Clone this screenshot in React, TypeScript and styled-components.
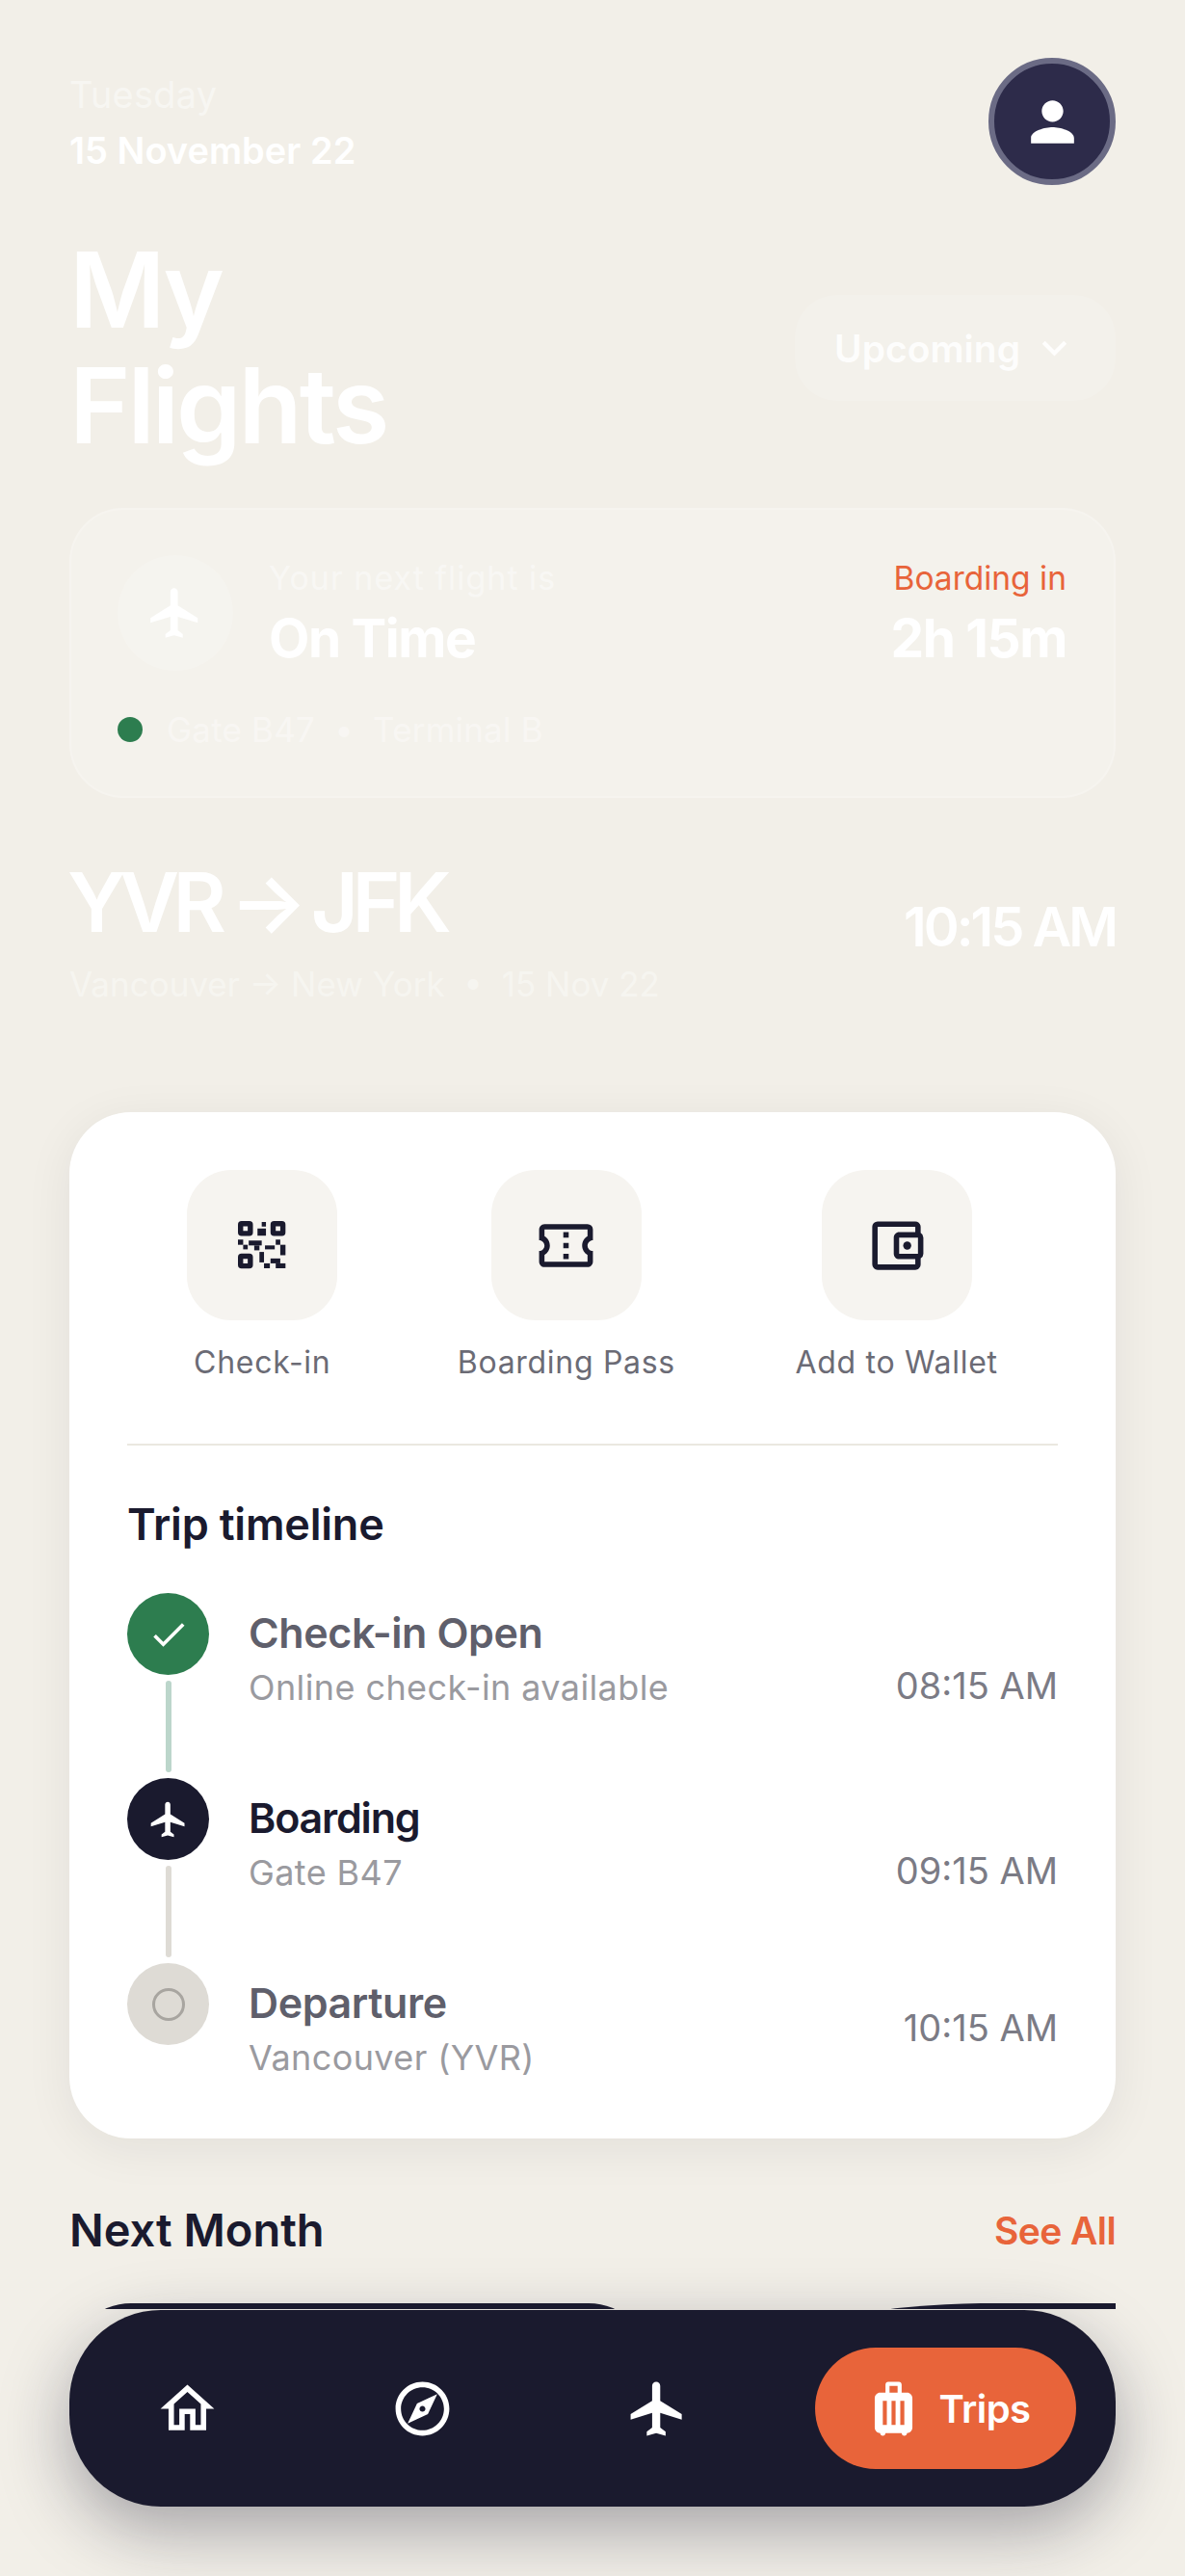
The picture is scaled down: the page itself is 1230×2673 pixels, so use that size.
import styled, { createGlobalStyle } from "styled-components";
import {
  MdCheck,
  MdExpandMore,
  MdFlight,
  MdLuggage,
  MdOutlineAccountBalanceWallet,
  MdOutlineConfirmationNumber,
  MdOutlineExplore,
  MdOutlineHome,
  MdPerson,
} from "react-icons/md";
import type { ReactNode } from "react";

const navy = "#1a1a2e";
const orange = "#e8643a";

const Global = createGlobalStyle`
  html, body {
    margin: 0;
    padding: 0;
    background: #f2efe8;
  }
  * {
    box-sizing: border-box;
  }
  body {
    font-family: Inter, "Liberation Sans", sans-serif;
  }
`;

const Page = styled.div`
  position: relative;
  width: 1230px;
  height: 2673px;
  overflow: hidden;
  padding: 72px 72px 0;
  background: #f2efe8;
`;

const TopBar = styled.header`
  display: flex;
  justify-content: space-between;
  align-items: flex-start;
  margin-top: -12px;
`;
const DateBlock = styled.div`
  display: flex;
  flex-direction: column;
  padding-top: 9px;
`;
const DayName = styled.span`
  font-size: 38px;
  line-height: 59px;
  color: rgba(255, 255, 255, 0.45);
  letter-spacing: 0.2px;
`;
const DateText = styled.span`
  font-size: 38px;
  line-height: 56px;
  font-weight: 600;
  color: #fff;
`;
const Avatar = styled.div`
  display: flex;
  align-items: center;
  justify-content: center;
  width: 132px;
  height: 132px;
  border-radius: 50%;
  background: #2d2b4a;
  border: 6px solid #6b6b85;
  color: #fff;
`;

const TitleRow = styled.div`
  display: flex;
  justify-content: space-between;
  align-items: center;
  margin-top: 49px;
`;
const Title = styled.h1`
  margin: 0;
  font-size: 108px;
  line-height: 120px;
  font-weight: 600;
  color: #fff;
  letter-spacing: -3px;
`;
const Filter = styled.div`
  display: flex;
  align-items: center;
  gap: 10px;
  width: 333px;
  height: 110px;
  padding: 0 38px 0 41px;
  border-radius: 44px;
  background: rgba(255, 255, 255, 0.14);
  color: rgba(255, 255, 255, 0.9);
  font-size: 39px;
  font-weight: 600;
`;

const StatusCard = styled.section`
  margin-top: 46px;
  padding: 46px 49px 50px 48px;
  height: 301px;
  border-radius: 56px;
  background: rgba(255, 255, 255, 0.2);
  border: 2px solid rgba(255, 255, 255, 0.16);
`;
const StatusTop = styled.div`
  display: flex;
  align-items: center;
  justify-content: space-between;
`;
const StatusLeft = styled.div`
  display: flex;
  align-items: center;
  gap: 37px;
`;
const PlaneBubble = styled.div`
  display: flex;
  align-items: center;
  justify-content: center;
  width: 120px;
  height: 120px;
  border-radius: 50%;
  background: rgba(255, 255, 255, 0.16);
  color: rgba(255, 255, 255, 0.95);
`;
const StatusStack = styled.div<{ $right?: boolean }>`
  display: flex;
  flex-direction: column;
  gap: 2px;
  align-items: ${(p) => (p.$right ? "flex-end" : "flex-start")};
`;
const Small = styled.span<{ $orange?: boolean }>`
  font-size: ${(p) => (p.$orange ? "33.5px" : "34px")};
  line-height: 50px;
  letter-spacing: ${(p) => (p.$orange ? "0" : "1px")};
  color: ${(p) => (p.$orange ? orange : "rgba(255, 255, 255, 0.45)")};
`;
const Big = styled.span`
  font-size: 55px;
  line-height: 70px;
  font-weight: 700;
  color: #fff;
  letter-spacing: -1.4px;
`;
const GateRow = styled.div`
  display: flex;
  align-items: center;
  gap: 25px;
  margin-top: 39px;
`;
const GreenDot = styled.span`
  width: 26px;
  height: 26px;
  border-radius: 50%;
  background: #2d7d4f;
`;
const GateText = styled.span`
  font-size: 35px;
  letter-spacing: 0.2px;
  color: rgba(255, 255, 255, 0.4);
  white-space: pre;
`;

const RouteRow = styled.div`
  display: flex;
  justify-content: space-between;
  align-items: flex-end;
  margin-top: 54px;
`;
const RouteCode = styled.div`
  font-size: 85px;
  line-height: 110px;
  font-weight: 600;
  color: #fff;
  letter-spacing: -6.5px;
  word-spacing: -5px;
  margin-left: -2px;
`;
const RouteTime = styled.div`
  font-size: 56px;
  line-height: 70px;
  font-weight: 600;
  color: #fff;
  letter-spacing: -3px;
  margin-bottom: -5px;
`;
const RouteSub = styled.div`
  font-size: 35px;
  line-height: 50px;
  margin-top: 4px;
  color: rgba(255, 255, 255, 0.4);
  white-space: pre;
`;

const MainCard = styled.section`
  margin-top: 108px;
  padding: 60px 60px 0;
  height: 1065px;
  border-radius: 64px;
  background: #fff;
  box-shadow: 0 10px 50px rgba(26, 26, 46, 0.07);
`;
const Actions = styled.div`
  display: flex;
  justify-content: space-around;
`;
const Action = styled.div`
  display: flex;
  flex-direction: column;
  align-items: center;
  gap: 22px;
`;
const Tile = styled.div`
  display: flex;
  align-items: center;
  justify-content: center;
  width: 156px;
  height: 156px;
  border-radius: 46px;
  background: #f6f4f0;
  color: ${navy};
`;
const ActionLabel = styled.span`
  font-size: 32px;
  line-height: 44px;
  letter-spacing: 0.7px;
  color: #6b6b75;
`;
const Divider = styled.hr`
  margin: 62px 0 0;
  border: 0;
  height: 2px;
  background: #ebe8e0;
`;
const TimelineTitle = styled.h2`
  margin: 52px 0 0;
  font-size: 45px;
  line-height: 60px;
  font-weight: 600;
  color: ${navy};
  letter-spacing: -0.2px;
`;
const Steps = styled.div`
  margin-top: 41px;
`;
const Step = styled.div`
  display: flex;
  align-items: center;
`;
const Marker = styled.div`
  display: flex;
  flex-direction: column;
  align-items: center;
  align-self: flex-start;
  width: 85px;
  margin-right: 41px;
`;
const Bubble = styled.div<{ $bg: string; $fg: string }>`
  display: flex;
  align-items: center;
  justify-content: center;
  width: 85px;
  height: 85px;
  border-radius: 50%;
  background: ${(p) => p.$bg};
  color: ${(p) => p.$fg};
`;
const Ring = styled.span`
  width: 34px;
  height: 34px;
  border-radius: 50%;
  border: 3px solid #a8a5a0;
`;
const Connector = styled.div<{ $color: string }>`
  width: 6px;
  height: 95px;
  margin: 6px 0;
  border-radius: 3px;
  background: ${(p) => p.$color};
`;
const StepBody = styled.div`
  flex: 1;
  align-self: flex-start;
  padding: 13px 0 10px;
  display: flex;
  flex-direction: column;
`;
const StepTitle = styled.span<{ $active?: boolean }>`
  font-size: 43px;
  line-height: 56px;
  font-weight: 600;
  color: ${(p) => (p.$active ? navy : "#5f5f6b")};
  letter-spacing: ${(p) => (p.$active ? "-1.2px" : "-0.4px")};
`;
const StepSub = styled.span`
  font-size: 36px;
  line-height: 50px;
  margin-top: 4px;
  letter-spacing: 0.4px;
  color: #9a9a9f;
`;
const StepTime = styled.span`
  font-size: 38px;
  color: #7b7b85;
`;

const SectionHead = styled.div`
  display: flex;
  justify-content: space-between;
  align-items: center;
  margin-top: 60px;
`;
const SectionTitle = styled.h3`
  margin: 0;
  font-size: 47px;
  line-height: 70px;
  font-weight: 600;
  color: ${navy};
`;
const SeeAll = styled.span`
  font-size: 39px;
  font-weight: 600;
  color: ${orange};
  letter-spacing: -0.6px;
`;
// only the top of these cards shows above the nav, the row is clipped there
const Cards = styled.div`
  display: flex;
  height: 6px;
  overflow: hidden;
  margin-top: 41px;
`;
const LeadCard = styled.div`
  flex: 0 0 603px;
  height: 300px;
  background: ${navy};
  border-radius: 64px;
`;
const TrailCard = styled.div`
  flex: 0 0 600px;
  height: 300px;
  margin-left: 105px;
  background: ${navy};
  border-radius: 250px 0 0 0 / 64px 0 0 0;
`;

const Nav = styled.nav`
  position: absolute;
  left: 72px;
  right: 72px;
  top: 2397px;
  height: 204px;
  display: flex;
  align-items: center;
  justify-content: space-between;
  padding: 0 41px;
  border-radius: 95px;
  background: ${navy};
  box-shadow: 0 24px 70px rgba(26, 26, 46, 0.36);
`;
const NavIcon = styled.div`
  display: flex;
  align-items: center;
  justify-content: center;
  width: 162px;
  color: #fff;
`;
const NavActive = styled.div`
  display: flex;
  align-items: center;
  justify-content: center;
  gap: 14px;
  width: 271px;
  height: 126px;
  border-radius: 63px;
  background: ${orange};
  color: #fff;
  font-size: 40px;
  font-weight: 600;
  letter-spacing: -0.6px;
`;

const qrBlocks = [
  [305, 208, 13, 14],
  [292, 228, 26, 22],
  [232, 262, 16, 16],
  [248, 278, 14, 14],
  [265, 265, 40, 15],
  [282, 280, 16, 15],
  [315, 280, 30, 12],
  [348, 262, 14, 16],
  [362, 278, 16, 32],
  [298, 300, 14, 32],
  [312, 335, 18, 15],
  [332, 320, 30, 15],
  [348, 335, 30, 15],
];

function QrIcon() {
  return (
    <svg width="50" height="50" viewBox="232 205 148 148" fill="none">
      <rect x="240" y="213" width="30" height="30" rx="3" stroke="currentColor" strokeWidth="16" />
      <rect x="340" y="213" width="30" height="30" rx="3" stroke="currentColor" strokeWidth="16" />
      <rect x="240" y="313" width="30" height="30" rx="3" stroke="currentColor" strokeWidth="16" />
      {qrBlocks.map(([x, y, w, h]) => (
        <rect key={`${x}-${y}`} x={x} y={y} width={w} height={h} fill="currentColor" />
      ))}
    </svg>
  );
}

const actions: { label: string; icon: ReactNode }[] = [
  { label: "Check-in", icon: <QrIcon /> },
  { label: "Boarding Pass", icon: <MdOutlineConfirmationNumber size={67} /> },
  { label: "Add to Wallet", icon: <MdOutlineAccountBalanceWallet size={67} /> },
];

const steps = [
  {
    title: "Check-in Open",
    sub: "Online check-in available",
    time: "08:15 AM",
    bg: "#2d7d4f",
    fg: "#fff",
    icon: <MdCheck size={44} />,
    line: "#bcd6cb",
  },
  {
    title: "Boarding",
    sub: "Gate B47",
    time: "09:15 AM",
    bg: navy,
    fg: "#fff",
    icon: <MdFlight size={44} />,
    line: "#dedbd5",
    active: true,
  },
  {
    title: "Departure",
    sub: "Vancouver (YVR)",
    time: "10:15 AM",
    bg: "#dedbd5",
    fg: "#a8a5a0",
    icon: <Ring />,
  },
];

export default function App() {
  return (
    <Page>
      <Global />
      <TopBar>
        <DateBlock>
          <DayName>Tuesday</DayName>
          <DateText>15 November 22</DateText>
        </DateBlock>
        <Avatar>
          <MdPerson size={67} />
        </Avatar>
      </TopBar>

      <TitleRow>
        <Title>
          My
          <br />
          Flights
        </Title>
        <Filter>
          Upcoming
          <MdExpandMore size={52} />
        </Filter>
      </TitleRow>

      <StatusCard>
        <StatusTop>
          <StatusLeft>
            <PlaneBubble>
              <MdFlight size={62} />
            </PlaneBubble>
            <StatusStack>
              <Small>Your next flight is</Small>
              <Big>On Time</Big>
            </StatusStack>
          </StatusLeft>
          <StatusStack $right>
            <Small $orange>Boarding in</Small>
            <Big>2h 15m</Big>
          </StatusStack>
        </StatusTop>
        <GateRow>
          <GreenDot />
          <GateText>Gate B47  •  Terminal B</GateText>
        </GateRow>
      </StatusCard>

      <RouteRow>
        <RouteCode>YVR → JFK</RouteCode>
        <RouteTime>10:15 AM</RouteTime>
      </RouteRow>
      <RouteSub>Vancouver → New York  •  15 Nov 22</RouteSub>

      <MainCard>
        <Actions>
          {actions.map((a) => (
            <Action key={a.label}>
              <Tile>{a.icon}</Tile>
              <ActionLabel>{a.label}</ActionLabel>
            </Action>
          ))}
        </Actions>
        <Divider />
        <TimelineTitle>Trip timeline</TimelineTitle>
        <Steps>
          {steps.map((s) => (
            <Step key={s.title}>
              <Marker>
                <Bubble $bg={s.bg} $fg={s.fg}>
                  {s.icon}
                </Bubble>
                {s.line && <Connector $color={s.line} />}
              </Marker>
              <StepBody>
                <StepTitle $active={s.active}>{s.title}</StepTitle>
                <StepSub>{s.sub}</StepSub>
              </StepBody>
              <StepTime>{s.time}</StepTime>
            </Step>
          ))}
        </Steps>
      </MainCard>

      <SectionHead>
        <SectionTitle>Next Month</SectionTitle>
        <SeeAll>See All</SeeAll>
      </SectionHead>
      <Cards>
        <LeadCard />
        <TrailCard />
      </Cards>

      <Nav>
        <NavIcon>
          <MdOutlineHome size={67} />
        </NavIcon>
        <NavIcon>
          <MdOutlineExplore size={67} />
        </NavIcon>
        <NavIcon>
          <MdFlight size={67} />
        </NavIcon>
        <NavActive>
          <MdLuggage size={67} />
          Trips
        </NavActive>
      </Nav>
    </Page>
  );
}
